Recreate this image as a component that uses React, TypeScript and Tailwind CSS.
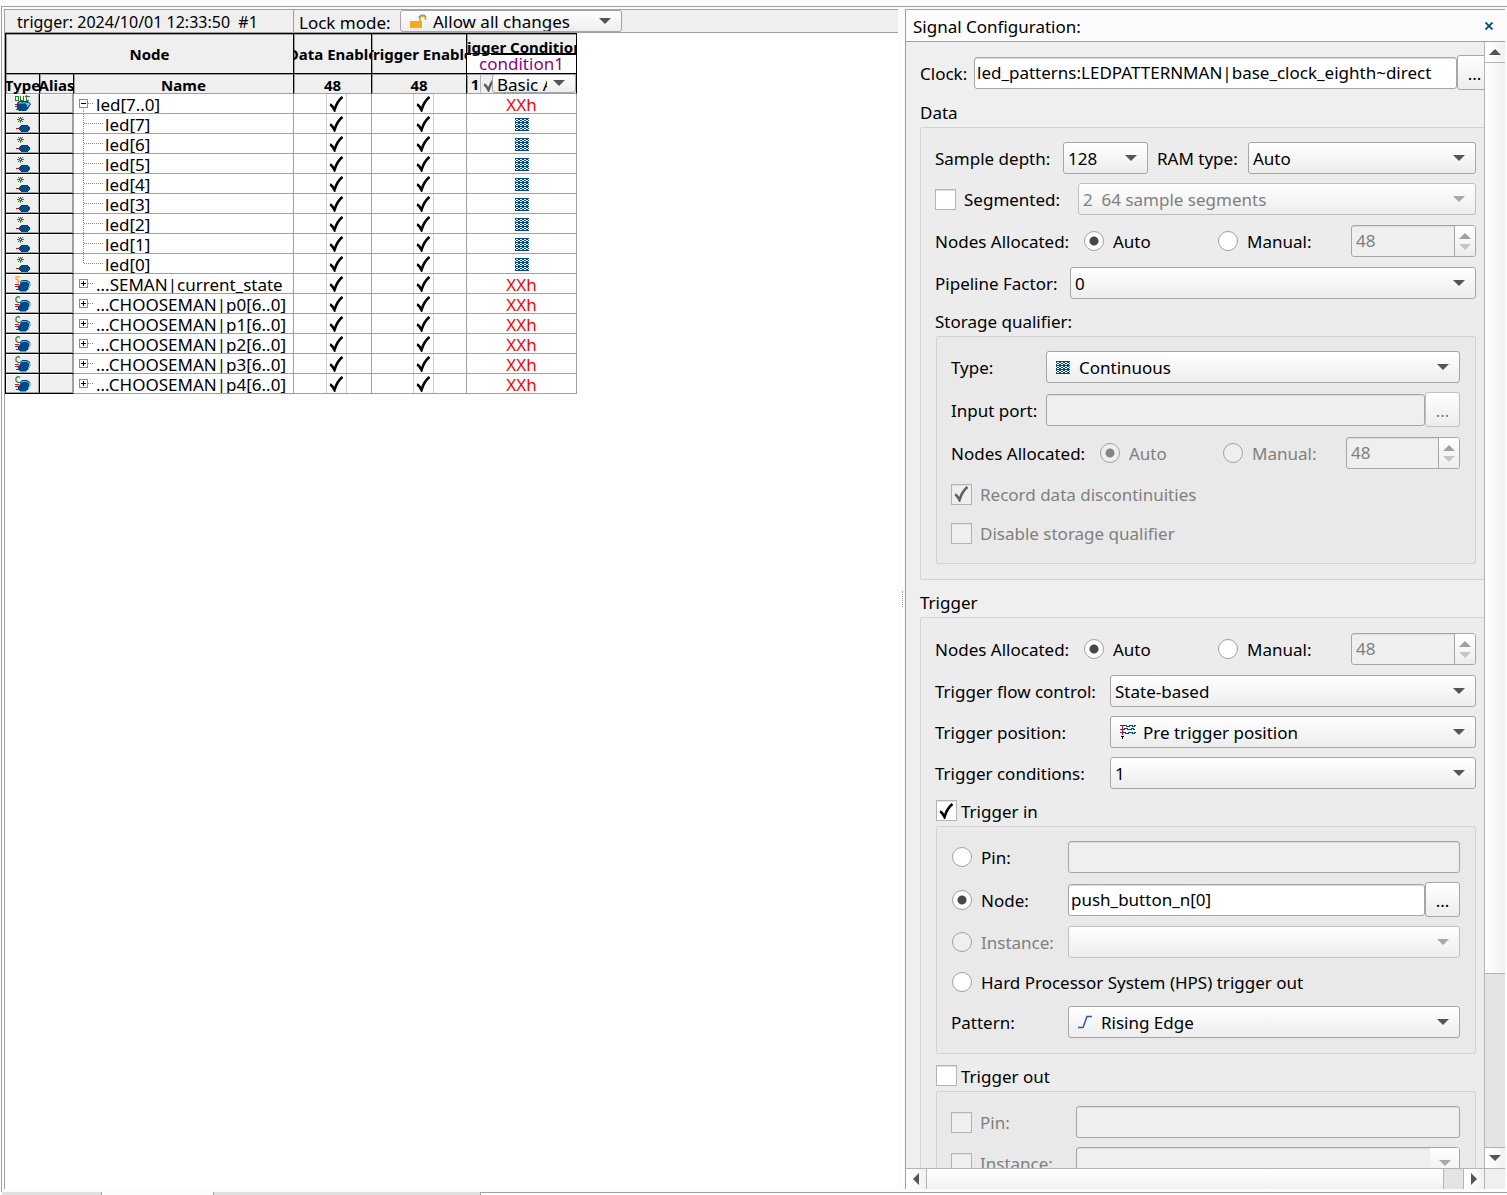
import React, { useState } from "react";

type Kind = "out" | "star" | "s" | "c";

const ROWS: { name: string; kind: Kind; level: "root" | "child" | "last" | "closed" }[] = [
  { name: "led[7..0]", kind: "out", level: "root" },
  { name: "led[7]", kind: "star", level: "child" },
  { name: "led[6]", kind: "star", level: "child" },
  { name: "led[5]", kind: "star", level: "child" },
  { name: "led[4]", kind: "star", level: "child" },
  { name: "led[3]", kind: "star", level: "child" },
  { name: "led[2]", kind: "star", level: "child" },
  { name: "led[1]", kind: "star", level: "child" },
  { name: "led[0]", kind: "star", level: "last" },
  { name: "...SEMAN|current_state", kind: "s", level: "closed" },
  { name: "...CHOOSEMAN|p0[6..0]", kind: "c", level: "closed" },
  { name: "...CHOOSEMAN|p1[6..0]", kind: "c", level: "closed" },
  { name: "...CHOOSEMAN|p2[6..0]", kind: "c", level: "closed" },
  { name: "...CHOOSEMAN|p3[6..0]", kind: "c", level: "closed" },
  { name: "...CHOOSEMAN|p4[6..0]", kind: "c", level: "closed" },
];

function TypeIcon({ kind }: { kind: Kind }) {
  if (kind === "star") {
    return (
      <svg className="block" width="16" height="19" viewBox="0 0 16 19" shapeRendering="crispEdges" aria-hidden="true">
        <path d="M4 3h1v2h-1zM2 3h1v1h-1zM6 3h1v1h-1zM3 4h3v1h-3zM1 5h2v1h-2zM6 5h2v1h-2zM3 5h1v1h-1zM5 5h1v1h-1zM3 6h3v1h-3zM2 7h1v1h-1zM4 7h1v2h-1zM6 7h1v1h-1z" fill="#2f7d32" />
        <path d="M0 14h4v1h-4z" fill="#e30613" />
        <path d="M5 11h7v1h1v1h1v3h-1v1h-1v1h-7v-1h-1v-1h-1v-3h1v-1h1z" fill="#004a86" />
      </svg>
    );
  }
  return (
    <svg className="block" width="17" height="19" viewBox="0 0 17 19" aria-hidden="true">
      {kind === "out" && (
        <path
          d="M1.500 2.500h2v4h-3v-4h1M5.500 2v4.500h3V2M11.500 1v5.500h2M9.500 2.500h5"
          fill="none"
          stroke="#2f7d32"
          shapeRendering="crispEdges"
        />
      )}
      {kind === "s" && <path d="M5 3.500L3 2.500 1 3.500V5L4 6.500V8L2 8.500" fill="none" stroke="#f5a623" strokeWidth="1.300" />}
      {kind === "c" && <path d="M5 3.500L3 2.500 1 4V7L3 8.500H5" fill="none" stroke="#2f7d32" strokeWidth="1.200" />}
      <path d="M0 10.500h4M0 12.500h4M1 15.500h4" stroke="#e30613" shapeRendering="crispEdges" />
      {kind === "out" ? (
        <>
          <path d="M2 9l2-2h9l3 3-3 5-2 2H4l-2-2z" fill="#004a86" />
          <path d="M3 9.500h8l1 2v2l3-3.500-2.500-2H5z" fill="#7cc4f5" />
          <path d="M6 8h6l1 1" fill="none" stroke="#004a86" />
        </>
      ) : (
        <>
          <path d="M5 8l2-2h5l3 2 .5 3-2.500 5H6z" fill="#004a86" />
          <path d="M4.500 10L7 8h5l2 1.500V12l-1.500 3L14 14.500l2-4L13 7.500 7 7z" fill="#7cc4f5" />
          <path d="M3 12.500L5.500 10H11l2 2.500v2.500L11 17.500H5.500L3 15.500z" fill="#004a86" />
        </>
      )}
    </svg>
  );
}

function TreeGlyph({ level }: { level: "root" | "child" | "last" | "closed" }) {
  const dots = { stroke: "#8a8a8a", strokeDasharray: "1 1", fill: "none" };
  if (level === "child" || level === "last") {
    return (
      <svg className="block shrink-0" width="31" height="20" viewBox="0 0 31 20" shapeRendering="crispEdges" aria-hidden="true">
        <path d={level === "child" ? "M9.500 0V20" : "M9.500 0V10"} {...dots} />
        <path d="M10 9.500H30" {...dots} />
      </svg>
    );
  }
  return (
    <svg className="block shrink-0" width="22" height="20" viewBox="0 0 22 20" shapeRendering="crispEdges" aria-hidden="true">
      <rect x="5.500" y="5.500" width="8" height="8" fill="#fff" stroke="#8a8a8a" />
      <path d="M7 9.500h5" stroke="#000" />
      {level === "closed" && <path d="M9.500 7v5" stroke="#000" />}
      <path d="M14 9.500H20" {...dots} />
      {level === "root" && <path d="M9.500 15V20" {...dots} />}
    </svg>
  );
}

function Hatch({ className = "" }: { className?: string }) {
  return (
    <svg className={`block ${className}`} width="14" height="13" viewBox="0 0 14 13" shapeRendering="crispEdges" aria-hidden="true">
      <defs>
        <pattern id="hatch" width="4" height="4" patternUnits="userSpaceOnUse">
          <rect width="4" height="4" fill="#fff" />
          <path d="M0 0h4v1h-4zM0 1h1v1h-1zM3 1h1v1h-1zM1 2h2v1h-2zM0 3h1v1h-1zM3 3h1v1h-1z" fill="#004a86" />
        </pattern>
      </defs>
      <rect width="14" height="13" fill="url(#hatch)" />
    </svg>
  );
}

function FlagIcon() {
  return (
    <svg className="block" width="17" height="16" viewBox="0 0 17 16" shapeRendering="crispEdges" aria-hidden="true">
      <path
        d="M0 1.500h6v1h3v-1h3v1h2v-1h2M0 5.500h4v-1h3v1h4v-1h2v1h2M0 8.500h5v1h3v-1h4v1h2v-1h2"
        stroke="#004a86"
        fill="none"
      />
      <path d="M2.500 1v10" stroke="#e30613" strokeWidth="1" />
      <path d="M1 12h3v1h-1v2h-1v-2h-1z" fill="#000" />
    </svg>
  );
}

function Triangle({ dir = "down", className = "" }: { dir?: "up" | "down" | "left" | "right"; className?: string }) {
  const shape = {
    down: "M0 0H12L6 6Z",
    up: "M0 6H12L6 0Z",
    left: "M6 0V12L0 6Z",
    right: "M0 0V12L6 6Z",
  }[dir];
  const flat = dir === "up" || dir === "down";
  return (
    <svg className={`block ${className}`} width={flat ? 12 : 6} height={flat ? 6 : 12} viewBox={flat ? "0 0 12 6" : "0 0 6 12"} aria-hidden="true">
      <path d={shape} fill="currentColor" />
    </svg>
  );
}

function Select({
  label,
  value,
  icon,
  disabled,
  className = "flex-1",
}: {
  label: string;
  value: string;
  icon?: React.ReactNode;
  disabled?: boolean;
  className?: string;
}) {
  return (
    <div className={`relative h-8 min-w-0 ${className}`}>
      <select
        aria-label={label}
        disabled={disabled}
        className={`block size-full appearance-none whitespace-pre rounded-[3px] border bg-linear-to-b from-white to-[#ededed] pr-8 pt-0.5 opacity-100 ${
          icon ? "pl-8" : "pl-1"
        } ${disabled ? "border-[#c0c0c0] text-[#808080]" : "border-[#a6a6a6] text-black"}`}
      >
        <option>{value}</option>
      </select>
      {icon && <span className="pointer-events-none absolute left-2.5 top-2">{icon}</span>}
      <Triangle className={`pointer-events-none absolute right-[11px] top-[13px] ${disabled ? "text-[#a8a8a8]" : "text-[#555]"}`} />
    </div>
  );
}

function TextBox({ label, value = "", disabled }: { label: string; value?: string; disabled?: boolean }) {
  return (
    <input
      type="text"
      aria-label={label}
      defaultValue={value}
      disabled={disabled}
      className="h-8 min-w-0 flex-1 rounded-[3px] border border-[#a6a6a6] bg-white px-0.5 shadow-[inset_0_1px_0_#dcdcdc] disabled:bg-[#efefef]"
    />
  );
}

function Browse({ disabled }: { disabled?: boolean }) {
  return (
    <button
      type="button"
      aria-label="Browse"
      disabled={disabled}
      className="h-[35px] w-[35px] shrink-0 rounded-[3px] border border-[#a6a6a6] bg-linear-to-b from-white to-[#ededed] pt-0.5 text-black disabled:border-[#c0c0c0] disabled:text-[#808080]"
    >
      ...
    </button>
  );
}

function Spin({ label, disabled, className }: { label: string; disabled?: boolean; className: string }) {
  return (
    <div className={`flex h-8 shrink-0 overflow-hidden rounded-[3px] border border-[#a6a6a6] bg-[#efefef] shadow-[inset_0_1px_0_#dcdcdc] ${className}`}>
      <input
        type="number"
        aria-label={label}
        defaultValue={48}
        disabled={disabled}
        className="min-w-0 flex-1 bg-transparent pl-1 text-[#808080] [appearance:textfield]"
      />
      <div className="flex w-[21px] flex-col border-l border-[#a6a6a6] bg-linear-to-b from-white to-[#ededed]">
        <button type="button" aria-label="Increase" disabled={disabled} className="flex flex-1 items-center justify-center pt-1 text-[#a0a0a0]">
          <Triangle dir="up" />
        </button>
        <button type="button" aria-label="Decrease" disabled={disabled} className="flex flex-1 items-center justify-center pb-1 text-[#c6c6c6]">
          <Triangle />
        </button>
      </div>
    </div>
  );
}

function Radio({
  name,
  text,
  checked,
  disabled,
  className = "",
}: {
  name: string;
  text: string;
  checked?: boolean;
  disabled?: boolean;
  className?: string;
}) {
  return (
    <label className={`flex shrink-0 items-center gap-[9px] ${disabled ? "text-[#808080]" : ""} ${className}`}>
      <input
        type="radio"
        name={name}
        defaultChecked={checked}
        disabled={disabled}
        className="size-5 shrink-0 appearance-none rounded-full border border-[#a0a0a0] bg-white checked:bg-[radial-gradient(circle,#474747_4px,#ffffff_5px)] disabled:bg-[#efefef] disabled:checked:bg-[radial-gradient(circle,#858585_4px,#efefef_5px)]"
      />
      <span className="pt-0.5">{text}</span>
    </label>
  );
}

function CheckMark({ className = "" }: { className?: string }) {
  return (
    <svg className={`pointer-events-none absolute ${className}`} width="15" height="16" viewBox="0 0 15 16" aria-hidden="true">
      <path d="M1 8.500C2.500 9 4 11 5.500 14C7 9 9.500 4 13.500 1" fill="none" stroke="currentColor" strokeWidth="2.600" />
    </svg>
  );
}

function Check({
  text,
  defaultChecked = false,
  disabled,
  className = "gap-2",
}: {
  text: string;
  defaultChecked?: boolean;
  disabled?: boolean;
  className?: string;
}) {
  const [on, setOn] = useState(defaultChecked);
  return (
    <label className={`relative flex shrink-0 items-center ${disabled ? "text-[#808080]" : ""} ${className}`}>
      <input
        type="checkbox"
        checked={on}
        disabled={disabled}
        onChange={(e) => setOn(e.target.checked)}
        className="size-[21px] shrink-0 appearance-none border border-[#b4b4b4] bg-white shadow-[inset_0_1px_0_#e0e0e0] disabled:bg-[#efefef]"
      />
      {on && <CheckMark className={`left-[3px] ${disabled ? "text-[#606060]" : "text-black"}`} />}
      <span className="pt-0.5">{text}</span>
    </label>
  );
}

function GridCheck({ label }: { label: string }) {
  const [on, setOn] = useState(true);
  return (
    <div className="flex h-[19px] justify-center pl-2">
      <div className="relative">
        <input
          type="checkbox"
          aria-label={label}
          checked={on}
          onChange={(e) => setOn(e.target.checked)}
          className="block h-[19px] w-[21px] appearance-none border-x border-[#cfcfcf] bg-[#fdfdfd]"
        />
        {on && <CheckMark className="left-[3px] top-0.5 text-black" />}
      </div>
    </div>
  );
}

function HeaderText({ children, className = "h-[19px]" }: { children: React.ReactNode; className?: string }) {
  return <div className={`flex items-center justify-center overflow-x-clip whitespace-nowrap ${className}`}>{children}</div>;
}

function NodeTable() {
  const head = "border-b border-r border-black bg-[#efefef] p-0 font-bold shadow-[inset_1px_1px_0_#a0a0a0]";
  const sub = "border-b border-b-[#a0a0a0] border-r border-r-black bg-[#efefef] p-0 font-bold shadow-[inset_1px_1px_0_#a0a0a0]";
  const cell = "border-b border-r border-[#a0a0a0] p-0";
  return (
    <table className="w-[572px] table-fixed border-separate border-spacing-0 border-l border-t border-black">
      <colgroup>
        <col className="w-[34px]" />
        <col className="w-[34px]" />
        <col className="w-[220px]" />
        <col className="w-[78px]" />
        <col className="w-[95px]" />
        <col className="w-[110px]" />
      </colgroup>
      <thead className="text-[15px] leading-5">
        <tr>
          <th colSpan={3} className={head}>
            <HeaderText className="h-[39px]">Node</HeaderText>
          </th>
          <th className={head}>
            <HeaderText className="h-[39px]">Data Enable</HeaderText>
          </th>
          <th className={head}>
            <HeaderText className="h-[39px]">Trigger Enable</HeaderText>
          </th>
          <th className={head}>
            <HeaderText className="h-5 border-b border-black pt-1.5 underline">Trigger Conditions</HeaderText>
            <HeaderText className="h-[19px] text-[17px] font-normal text-[#8b008b] shadow-[inset_0_20px_0_#ffffff]">condition1</HeaderText>
          </th>
        </tr>
        <tr>
          <th className={sub}>
            <HeaderText className="h-[19px] pt-0.5">Type</HeaderText>
          </th>
          <th className={sub}>
            <HeaderText className="h-[19px] pt-0.5">Alias</HeaderText>
          </th>
          <th className={sub}>
            <HeaderText className="h-[19px] pt-0.5">Name</HeaderText>
          </th>
          <th className={sub}>
            <HeaderText className="h-[19px] pt-0.5">48</HeaderText>
          </th>
          <th className={sub}>
            <HeaderText className="h-[19px] pt-0.5">48</HeaderText>
          </th>
          <th className={sub}>
            <div className="flex h-[19px] overflow-hidden pl-[3px]">
              <span className="w-2.5">1</span>
              <span className="relative w-3 overflow-hidden border-l border-[#b4b4b4]">
                <input type="checkbox" aria-label="Enable condition" defaultChecked disabled className="absolute size-full appearance-none" />
                <CheckMark className="left-0.5 top-0.5 text-[#606060]" />
              </span>
              <span className="relative flex-1">
                <select
                  aria-label="Condition type"
                  className="block h-[19px] w-full appearance-none rounded-[3px] border border-[#a6a6a6] bg-linear-to-b from-white to-[#ededed] pl-1 pr-7 pt-0.5 text-[17px] font-normal leading-4"
                >
                  <option>Basic AND</option>
                </select>
                <Triangle className="pointer-events-none absolute right-[11px] top-1.5 text-[#555]" />
              </span>
            </div>
          </th>
        </tr>
      </thead>
      <tbody>
        {ROWS.map((row) => (
          <tr key={row.name}>
            <td className="border-b border-r border-black bg-[#efefef] p-0 shadow-[inset_-1px_-1px_0_#a0a0a0,inset_1px_1px_0_#ffffff]">
              <div className="flex h-[19px] items-center justify-center pl-0.5">
                <TypeIcon kind={row.kind} />
              </div>
            </td>
            <td className="border-b border-r border-b-black border-r-[#a0a0a0] bg-[#efefef] p-0 shadow-[inset_-1px_-1px_0_#a0a0a0,inset_1px_1px_0_#ffffff]" />
            <td className={cell}>
              <div className="flex h-[19px] overflow-hidden whitespace-nowrap leading-[21px]">
                <TreeGlyph level={row.level} />
                <span>{row.name}</span>
              </div>
            </td>
            <td className={cell}>
              <GridCheck label={`${row.name} data enable`} />
            </td>
            <td className={cell}>
              <GridCheck label={`${row.name} trigger enable`} />
            </td>
            <td className={cell}>
              <div className="flex h-[19px] justify-center overflow-hidden leading-[21px] text-[#ff0000]">
                {row.kind === "star" ? <Hatch className="mt-1" /> : "XXh"}
              </div>
            </td>
          </tr>
        ))}
      </tbody>
    </table>
  );
}

function SetupPane() {
  return (
    <section className="flex min-w-0 flex-1 flex-col border-l border-t border-[#a0a0a0] bg-white">
      <div className="flex h-[23px] items-center border-b border-[#a0a0a0] bg-[#efefef]">
        <div className="h-full w-[289px] shrink-0 whitespace-pre border-r border-[#a0a0a0] pl-3 text-[16px] leading-6">
          {"trigger: 2024/10/01 12:33:50  #1"}
        </div>
        <span className="w-[106px] shrink-0 pl-[5px] pt-1">Lock mode:</span>
        <div className="relative h-[22px] w-[222px]">
          <select
            aria-label="Lock mode"
            className="block size-full appearance-none rounded-[3px] border border-[#a6a6a6] bg-linear-to-b from-white to-[#ededed] pl-8 pr-8 pt-px leading-5"
          >
            <option>Allow all changes</option>
          </select>
          <svg className="pointer-events-none absolute left-2.5 top-1" width="17" height="15" viewBox="0 0 17 15" aria-hidden="true">
            <path d="M10 7V3.500L11.500 2H14L15.500 3.500V6" fill="none" stroke="#f7a81b" strokeWidth="1.800" />
            <path d="M9 4V3L11 1H14L16 3" fill="none" stroke="#3aa7d8" strokeWidth="1.200" />
            <rect x="0" y="7" width="12" height="7" fill="#f7a81b" />
          </svg>
          <Triangle className="pointer-events-none absolute right-[11px] top-2 text-[#555]" />
        </div>
      </div>
      <NodeTable />
    </section>
  );
}

function NodesAllocated({ name, disabled, nested }: { name: string; disabled?: boolean; nested?: boolean }) {
  return (
    <div className="flex items-center">
      <span className="w-[149px] shrink-0 pt-0.5">Nodes Allocated:</span>
      <Radio name={name} text="Auto" checked disabled={disabled} className={nested ? "w-[123px]" : "w-[134px]"} />
      <Radio name={name} text="Manual:" disabled={disabled} />
      <Spin label={`${name} nodes`} disabled className={nested ? "ml-auto w-[114px]" : "ml-auto w-[125px]"} />
    </div>
  );
}

const GROUP = "rounded-[2px] border border-[#d2d2d2]";

function ConfigForm() {
  return (
    <form className="-mr-2 pl-3.5 pt-[13px]">
      <div className="flex items-center">
        <span className="w-[54px] shrink-0 pt-0.5">Clock:</span>
        <TextBox label="Clock" value="led_patterns:LEDPATTERNMAN|base_clock_eighth~direct" />
        <Browse />
      </div>

      <h2 className="mt-2.5 h-[27px] pt-px">Data</h2>
      <div className={`${GROUP} bg-[#ececec] pb-[15px] pl-[14px] pr-[15px] pt-3.5`}>
        <div className="flex items-center">
          <span className="w-32 shrink-0 pt-0.5">Sample depth:</span>
          <Select label="Sample depth" value="128" className="w-[85px]" />
          <span className="w-[100px] shrink-0 pl-[9px] pt-0.5">RAM type:</span>
          <Select label="RAM type" value="Auto" />
        </div>
        <div className="mt-[9px] flex items-center">
          <Check text="Segmented:" className="w-[143px] gap-2" />
          <Select label="Segments" value={"2\u00a0 64 sample segments"} disabled />
        </div>
        <div className="mt-2.5">
          <NodesAllocated name="data" />
        </div>
        <div className="mt-2.5 flex items-center">
          <span className="w-[135px] shrink-0 pt-0.5">Pipeline Factor:</span>
          <Select label="Pipeline factor" value="0" />
        </div>
        <h3 className="mt-2.5 h-[27px] pt-px">Storage qualifier:</h3>
        <div className={`${GROUP} ml-px bg-[#e9e9e9] pb-4 pl-3.5 pr-[15px] pt-3.5`}>
          <div className="flex items-center">
            <span className="w-[95px] shrink-0 pt-0.5">Type:</span>
            <Select label="Type" value="Continuous" icon={<Hatch className="mt-0.5" />} />
          </div>
          <div className="mt-[9px] flex items-center">
            <span className="w-[95px] shrink-0 pt-0.5">Input port:</span>
            <TextBox label="Input port" disabled />
            <Browse disabled />
          </div>
          <div className="mt-2.5">
            <NodesAllocated name="storage" disabled nested />
          </div>
          <div className="mt-[11px] flex h-7 items-center">
            <Check text="Record data discontinuities" defaultChecked disabled />
          </div>
          <div className="mt-[11px] flex h-7 items-center">
            <Check text="Disable storage qualifier" disabled />
          </div>
        </div>
      </div>

      <h2 className="mt-2.5 h-[27px] pt-px">Trigger</h2>
      <div className={`${GROUP} bg-[#ececec] pb-[15px] pl-[14px] pr-[15px] pt-[15px]`}>
        <NodesAllocated name="trigger" />
        <div className="mt-2.5 flex items-center">
          <span className="w-[175px] shrink-0 pt-0.5">Trigger flow control:</span>
          <Select label="Trigger flow control" value="State-based" />
        </div>
        <div className="mt-[9px] flex items-center">
          <span className="w-[175px] shrink-0 pt-0.5">Trigger position:</span>
          <Select label="Trigger position" value="Pre trigger position" icon={<FlagIcon />} />
        </div>
        <div className="mt-[9px] flex items-center">
          <span className="w-[175px] shrink-0 pt-0.5">Trigger conditions:</span>
          <Select label="Trigger conditions" value="1" />
        </div>
        <div className="ml-px mt-1.5 flex h-[31px] items-center">
          <Check text="Trigger in" defaultChecked className="gap-1" />
        </div>
        <div className={`${GROUP} ml-px bg-[#e9e9e9] px-[15px] pb-[15px] pt-3.5`}>
          <div className="flex items-center">
            <Radio name="trigger-in" text="Pin:" className="w-[116px]" />
            <TextBox label="Trigger in pin" disabled />
          </div>
          <div className="mt-[9px] flex items-center">
            <Radio name="trigger-in" text="Node:" checked className="w-[116px]" />
            <TextBox label="Trigger in node" value="push_button_n[0]" />
            <Browse />
          </div>
          <div className="mt-[9px] flex items-center">
            <Radio name="trigger-in" text="Instance:" disabled className="w-[116px]" />
            <Select label="Trigger in instance" value="" disabled />
          </div>
          <div className="mt-2.5 flex h-7 items-center">
            <Radio name="trigger-in" text="Hard Processor System (HPS) trigger out" />
          </div>
          <div className="mt-2.5 flex items-center">
            <span className="-ml-px w-[117px] shrink-0 pt-0.5">Pattern:</span>
            <Select
              label="Pattern"
              value="Rising Edge"
              icon={
                <svg className="block" width="15" height="16" viewBox="0 0 15 16" aria-hidden="true">
                  <path d="M0 13.500H5L9 2.500H14" fill="none" stroke="#3455b4" strokeWidth="1.500" />
                </svg>
              }
            />
          </div>
        </div>
        <div className="ml-px mt-1.5 flex h-[31px] items-center">
          <Check text="Trigger out" className="gap-1" />
        </div>
        <div className={`${GROUP} ml-px bg-[#e9e9e9] py-3.5 pl-3.5 pr-[15px]`}>
          <div className="flex items-center">
            <Check text="Pin:" disabled className="w-[125px] gap-2" />
            <TextBox label="Trigger out pin" disabled />
          </div>
          <div className="mt-[9px] flex items-center">
            <Check text="Instance:" disabled className="w-[125px] gap-2" />
            <div className="relative flex flex-1">
              <TextBox label="Trigger out instance" disabled />
              <span className="pointer-events-none absolute inset-y-px right-px flex w-[29px] justify-center bg-linear-to-b from-white to-[#ededed] pt-3">
                <Triangle className="text-[#a8a8a8]" />
              </span>
            </div>
          </div>
        </div>
      </div>
    </form>
  );
}

const BAR_BUTTON = "flex shrink-0 items-center justify-center bg-linear-to-r from-white to-[#f1f1f1] text-[#555]";

function ConfigPane() {
  return (
    <aside className="flex w-[600px] shrink-0 flex-col border-l border-t border-[#a0a0a0]">
      <header className="flex h-8 shrink-0 items-center justify-between border-b border-[#a0a0a0] bg-[#fcfcfc] pl-[7px] pr-3">
        <h1 className="pt-0.5">Signal Configuration:</h1>
        <button type="button" aria-label="Close">
          <svg className="block" width="8" height="8" viewBox="0 0 8 8" aria-hidden="true">
            <path d="M.5.5l7 7M7.500.5l-7 7" stroke="#004a86" strokeWidth="1.800" />
          </svg>
        </button>
      </header>
      <div className="flex min-h-0 flex-1">
        <div className="min-w-0 flex-1 overflow-hidden bg-[#efefef]">
          <ConfigForm />
        </div>
        <div className="flex w-[21px] shrink-0 flex-col border-l border-[#b4b4b4] bg-[#e4e4e4]">
          <button type="button" aria-label="Scroll up" className={`${BAR_BUTTON} h-[21px] border-b border-[#b4b4b4]`}>
            <Triangle dir="up" />
          </button>
          <div className="flex-1">
            <div className="h-[84%] border-b border-[#b4b4b4] bg-linear-to-r from-white to-[#f1f1f1]" />
          </div>
          <button type="button" aria-label="Scroll down" className={`${BAR_BUTTON} h-[21px] border-t border-[#b4b4b4]`}>
            <Triangle />
          </button>
        </div>
      </div>
      <div className="flex h-[21px] shrink-0 border-t border-[#b4b4b4] bg-[#e4e4e4]">
        <button type="button" aria-label="Scroll left" className={`${BAR_BUTTON} w-[21px] border-r border-[#b4b4b4]`}>
          <Triangle dir="left" />
        </button>
        <div className="flex-1 pr-[19px]">
          <div className="h-full border-r border-[#b4b4b4] bg-linear-to-b from-white to-[#f1f1f1]" />
        </div>
        <button type="button" aria-label="Scroll right" className={`${BAR_BUTTON} w-[21px] border-l border-[#b4b4b4]`}>
          <Triangle dir="right" />
        </button>
        <div className="w-[21px] border-l border-[#b4b4b4] bg-[#efefef]" />
      </div>
    </aside>
  );
}

export default function App() {
  return (
    <main className="flex h-screen flex-col overflow-hidden bg-[#fcfcfc] pt-1.5 font-['Noto_Sans',sans-serif] text-[17px] leading-6 text-black">
      <div className="ml-px flex min-h-0 flex-1 border-l border-t border-[#a0a0a0] pb-[3px] pl-0.5 pr-0.5 pt-0.5">
        <SetupPane />
        <div className="flex w-[7px] shrink-0 items-center">
          <div className="ml-1 h-4 w-0.5 border-l border-dotted border-[#a0a0a0]" />
        </div>
        <ConfigPane />
      </div>
      <footer className="flex h-[3px] shrink-0">
        <div className="ml-0.5 w-[99px] bg-[#e0e0e0]" />
        <div className="w-[113px] border-x border-[#a0a0a0]" />
        <div className="w-[266px] bg-[#e0e0e0]" />
        <div className="flex-1 border-l border-t border-[#a0a0a0]" />
      </footer>
    </main>
  );
}
